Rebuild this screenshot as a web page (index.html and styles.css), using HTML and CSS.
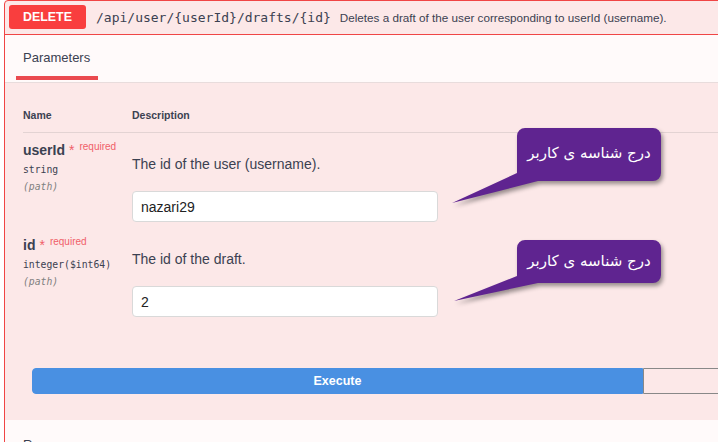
FILE: index.html
```html
<!DOCTYPE html>
<html>
<head>
<meta charset="utf-8">
<link rel="stylesheet" href="styles.css">
</head>
<body>
<div class="opblock">
  <div class="summary">
    <span class="method">DELETE</span>
    <span class="path">/api/user/{userId}/drafts/{id}</span>
    <span class="summary-desc">Deletes a draft of the user corresponding to userId (username).</span>
  </div>
  <div class="section-header">
    <div class="tab">Parameters</div>
  </div>
  <div class="params">
    <div class="table">
      <div class="th">Name</div>
      <div class="th">Description</div>
      <div class="name-cell">
        <div class="pname">userId<span class="star">*</span><span class="req">required</span></div>
        <div class="ptype">string</div>
        <div class="pin">(path)</div>
      </div>
      <div class="desc-cell">
        <p class="pdesc">The id of the user (username).</p>
        <input class="pinput" type="text" value="nazari29">
      </div>
      <div class="name-cell">
        <div class="pname">id<span class="star">*</span><span class="req">required</span></div>
        <div class="ptype">integer($int64)</div>
        <div class="pin">(path)</div>
      </div>
      <div class="desc-cell">
        <p class="pdesc">The id of the draft.</p>
        <input class="pinput" type="text" value="2">
      </div>
    </div>
  </div>
  <div class="execute-wrapper">
    <button class="btn execute">Execute</button>
    <button class="btn clear"></button>
  </div>
  <div class="section-header resp">
    <div class="resp-title">Responses</div>
  </div>
</div>

<div class="callout c1">
  <svg class="bubble" width="216" height="82" viewBox="0 0 216 82">
    <path d="M75,2 H203 A8,8 0 0 1 211,10 V47 A8,8 0 0 1 203,55 H88 L2,77 L67,47 V10 A8,8 0 0 1 75,2 Z" fill="#5f2490"/>
  </svg>
  <div class="callout-text t1">درج شناسه ی کاربر</div>
</div>
<div class="callout c2">
  <svg class="bubble" width="216" height="70" viewBox="0 0 216 70">
    <path d="M75,2 H203 A8,8 0 0 1 211,10 V37 A8,8 0 0 1 203,45 H88 L4,63 L67,38 V10 A8,8 0 0 1 75,2 Z" fill="#5f2490"/>
  </svg>
  <div class="callout-text t2">درج شناسه ی کاربر</div>
</div>
</body>
</html>
```
FILE: styles.css
```css
html, body {
  margin: 0;
  padding: 0;
  overflow: hidden;
  background: #ffffff;
  width: 718px;
  height: 442px;
}
body {
  position: relative;
  font-family: "Liberation Sans", Arial, sans-serif;
  color: #3b4151;
}
.opblock {
  margin-left: 4px;
  width: 1300px;
  border: 1px solid #f04545;
  border-radius: 4px;
  background: #fce8e8;
}
.summary {
  display: flex;
  align-items: center;
  padding: 4px 4px 5px 4px;
  border-bottom: 1px solid #f04545;
}
.method {
  display: flex;
  align-items: center;
  justify-content: center;
  width: 77px;
  height: 24px;
  background: #f93e3e;
  color: #fff;
  border-radius: 3px;
  font-weight: bold;
  font-size: 12.4px;
}
.path {
  margin-left: 10px;
  font-family: "DejaVu Sans Mono", monospace;
  font-size: 13px;
  color: #3b4151;
}
.summary-desc {
  margin-left: 9px;
  font-size: 11.7px;
  color: #3b4151;
}
.section-header {
  background: #fffafa;
  padding: 13px 0 2px 11px;
  border-bottom: 1px solid #e8dcdc;
}
.tab {
  display: inline-block;
  padding: 0 7px 10px 7px;
  width: 68px;
  border-bottom: 4px solid #ea4a4f;
  font-size: 13px;
  line-height: 17px;
}
.params {
  padding-left: 18px;
}
.table {
  display: grid;
  grid-template-columns: 109px 1fr;
}
.th {
  padding: 25px 0 10px 0;
  font-size: 10.5px;
  line-height: 14px;
  font-weight: bold;
  border-bottom: 1px solid #e3d3d3;
}
.name-cell {
  padding-top: 8px;
}
.pname {
  font-size: 14px;
  line-height: 18px;
  font-weight: bold;
}
.star {
  font-weight: normal;
  color: #f06068;
  margin-left: 4px;
}
.req {
  font-weight: normal;
  font-size: 10px;
  color: #f06068;
  position: relative;
  top: -5px;
  margin-left: 5px;
}
.ptype {
  font-family: "DejaVu Sans Mono", monospace;
  font-size: 9.75px;
  line-height: 17px;
}
.pin {
  font-family: "DejaVu Sans Mono", monospace;
  font-size: 9.75px;
  line-height: 17px;
  font-style: italic;
  color: #808080;
}
.desc-cell {
  padding: 8px 0 6px 0;
}
.pdesc {
  margin: 13px 0 17px 0;
  font-size: 14px;
  line-height: 20px;
}
.pinput {
  display: block;
  box-sizing: border-box;
  width: 306px;
  height: 31px;
  margin: 0;
  padding: 0 8px;
  border: 1px solid #d9d9d9;
  border-radius: 4px;
  background: #fff;
  font-family: "Liberation Sans", Arial, sans-serif;
  font-size: 14px;
  color: #222;
  outline: none;
}
.execute-wrapper {
  display: flex;
  padding: 45px 0 26px 27px;
}
.btn {
  flex: 0 0 611px;
  height: 26px;
  margin: 0;
  font-family: "Liberation Sans", Arial, sans-serif;
  font-weight: bold;
  font-size: 12.5px;
  box-sizing: border-box;
}
.execute {
  background: #4990e2;
  color: #fff;
  border: 1px solid #4990e2;
  border-radius: 4px 0 0 4px;
}
.clear {
  background: transparent;
  color: #3b4151;
  border: 1px solid #888;
  border-radius: 0 4px 4px 0;
}
.resp {
  padding: 16px 0 20px 18px;
  border-bottom: none;
}
.resp-title {
  font-size: 13px;
  line-height: 17px;
}
.callout {
  position: absolute;
  left: 450px;
  width: 216px;
}
.c1 { top: 126px; height: 82px; }
.c2 { top: 238px; height: 70px; }
.bubble {
  position: absolute;
  left: 0;
  top: 0;
  overflow: visible;
  filter: drop-shadow(2px 3px 2px rgba(0, 0, 0, 0.4));
}
.callout-text {
  position: relative;
  margin: 0 0 0 67px;
  width: 144px;
  display: flex;
  align-items: center;
  justify-content: center;
  direction: rtl;
  color: #fff;
  font-family: "DejaVu Sans", sans-serif;
  font-size: 15px;
}
.t1 { height: 53px; }
.t2 { height: 45px; }
```
